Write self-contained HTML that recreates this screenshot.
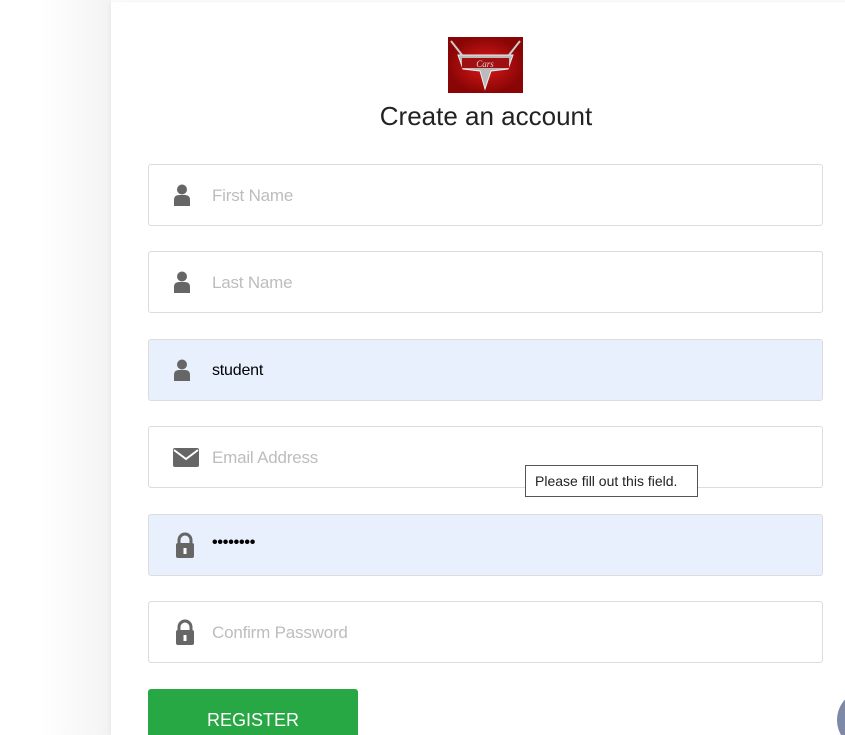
<!DOCTYPE html>
<html style="overflow:hidden;height:735px"><head><style>
body{margin:0;width:845px;height:735px;overflow:hidden;background:#fff;font-family:"Liberation Sans",sans-serif;position:relative}
.shade{position:absolute;left:40px;top:0;width:71px;height:735px;background:linear-gradient(to right,#fff,#f3f3f3)}
.card{position:absolute;left:111px;top:2px;width:760px;height:733px;background:#fff;border-radius:4px 4px 0 0;box-shadow:0 0 6px rgba(0,0,0,.08)}
.inp{position:absolute;left:148px;width:673px;height:60px;border:1px solid #dcdcdc;border-radius:3px;background:#fff}
.inp.f{background:#e8f0fe}
.inp span{position:absolute;left:63px;top:21px;font-size:17px;color:#bdbdbd;letter-spacing:-0.2px}
.inp span.v{color:#000;font-size:16px}
.ic{position:absolute;left:24px;top:19px}
h1{position:absolute;left:0;width:972px;top:101px;margin:0;text-align:center;font-weight:normal;font-size:26px;color:#222}
.btn{position:absolute;left:148px;top:689px;width:210px;height:60px;background:#28a745;border-radius:3px;color:#fff;font-size:18px;text-align:center;line-height:62px}
.tip{position:absolute;left:525px;top:465px;width:171px;height:30px;border:1px solid #555;background:#fff;font-size:14px;line-height:30px;text-indent:9px;color:#222}
</style></head><body>
<div class="shade"></div>
<div class="card"></div>
<svg style="position:absolute;left:448px;top:37px" width="75" height="56"><defs><radialGradient id="r"><stop offset="0" stop-color="#e01818"/><stop offset="1" stop-color="#8a0606"/></radialGradient></defs><rect width="75" height="56" fill="url(#r)"/><path d="M10 18 L65 18 L60 32 L43 34 L37 52 L32 34 L15 32 Z" fill="#bbb" stroke="#eee"/><path d="M3 4 L14 18 M72 4 L61 18" stroke="#ccc" stroke-width="2"/><rect x="14" y="21" width="47" height="10" fill="#a01010"/><text x="37" y="30" font-size="9" font-style="italic" fill="#ddd" text-anchor="middle" font-family="Liberation Serif">Cars</text></svg>
<h1>Create an account</h1>
<div class="inp" style="top:164px"><svg class="ic" width="18" height="22" viewBox="0 0 18 22"><circle cx="9" cy="5.5" r="5" fill="#666"/><path d="M1 22 V16 Q1 11 6 11 H12 Q17 11 17 16 V22 Z" fill="#666"/></svg><span>First Name</span></div>
<div class="inp" style="top:251px"><svg class="ic" width="18" height="22" viewBox="0 0 18 22"><circle cx="9" cy="5.5" r="5" fill="#666"/><path d="M1 22 V16 Q1 11 6 11 H12 Q17 11 17 16 V22 Z" fill="#666"/></svg><span>Last Name</span></div>
<div class="inp f" style="top:339px"><svg class="ic" width="18" height="22" viewBox="0 0 18 22"><circle cx="9" cy="5.5" r="5" fill="#666"/><path d="M1 22 V16 Q1 11 6 11 H12 Q17 11 17 16 V22 Z" fill="#666"/></svg><span class="v" style="top:22px">student</span></div>
<div class="inp" style="top:426px"><svg class="ic" style="top:21px" width="26" height="19" viewBox="0 0 26 19"><rect width="26" height="19" rx="2" fill="#666"/><path d="M1 2 L13 11 L25 2" stroke="#fff" stroke-width="2" fill="none"/></svg><span>Email Address</span></div>
<div class="inp f" style="top:514px"><svg class="ic" style="left:26px;top:17px" width="20" height="26" viewBox="0 0 20 26"><path d="M4 12 V8 a6 6 0 0 1 12 0 V12" stroke="#666" stroke-width="3" fill="none"/><rect x="1" y="11" width="18" height="15" rx="2" fill="#666"/><rect x="8.5" y="16" width="3" height="6" fill="#fff"/></svg><span class="v" style="top:19px;font-weight:bold">••••••••</span></div>
<div class="inp" style="top:601px"><svg class="ic" style="left:26px;top:17px" width="20" height="26" viewBox="0 0 20 26"><path d="M4 12 V8 a6 6 0 0 1 12 0 V12" stroke="#666" stroke-width="3" fill="none"/><rect x="1" y="11" width="18" height="15" rx="2" fill="#666"/><rect x="8.5" y="16" width="3" height="6" fill="#fff"/></svg><span>Confirm Password</span></div>
<div class="tip">Please fill out this field.</div>
<div class="btn">REGISTER</div>
<div style="position:absolute;left:837px;top:690px;width:60px;height:60px;border-radius:50%;background:#7d89a6"></div>
</body></html>
